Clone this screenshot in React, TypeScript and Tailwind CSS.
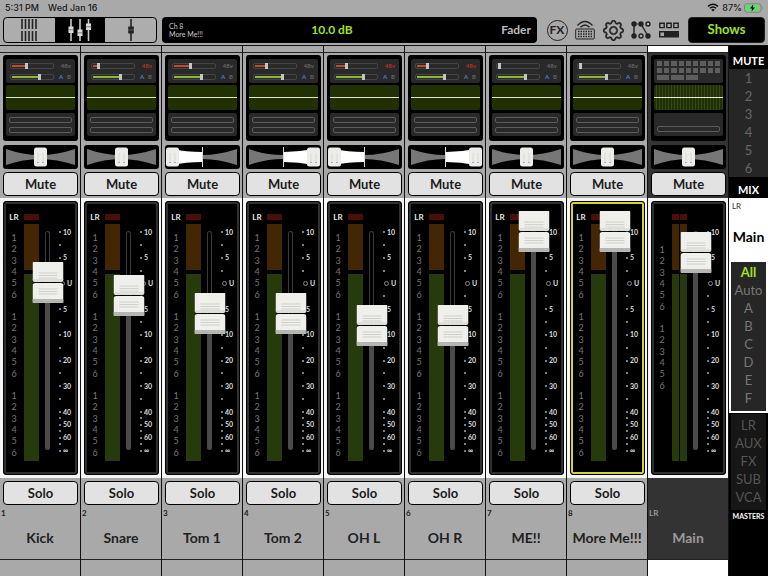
import { useState } from "react";
import { BsGear } from "react-icons/bs";
import { clsx } from "clsx";

type Channel = {
  id: string;
  name: string;
  gain: number;
  phantom: boolean;
  pan: number;
  level: number;
};

const channels: Channel[] = [
  { id: "1", name: "Kick", gain: 13, phantom: false, pan: 0, level: 167 },
  { id: "2", name: "Snare", gain: 4, phantom: true, pan: 0, level: 154 },
  { id: "3", name: "Tom 1", gain: 15, phantom: false, pan: -30, level: 136 },
  { id: "4", name: "Tom 2", gain: 10, phantom: false, pan: 30, level: 136 },
  { id: "5", name: "OH L", gain: 9, phantom: true, pan: -30, level: 124 },
  { id: "6", name: "OH R", gain: 9, phantom: true, pan: 30, level: 124 },
  { id: "7", name: "ME!!", gain: 0, phantom: false, pan: 0, level: 218 },
  { id: "8", name: "More Me!!!", gain: 0, phantom: false, pan: 0, level: 218 },
];

const FADER_MAX = 218;

// Half-step rows of the fader scale, top to bottom
const scale = [
  "10", "", ".", "", "5", "", ".", "", "U", "", ".", "", "5", "", ".", "",
  "10", "", ".", "", "20", "", ".", "", "30", "", ".", "", "40", ".", "50",
  ".", "60", ".", "∞",
];

const busSteps = ["1", "2", "3", "4", "5", "6"];

function Pan({ label, initial }: { label: string; initial: number }) {
  const [value, setValue] = useState(initial);
  const x = 37 + value;

  return (
    <div className="relative mt-1 h-6 overflow-hidden rounded-[3px] bg-black">
      <svg viewBox="0 0 75 24" className="h-6 w-full" aria-hidden="true">
        <path d="M3 4 Q20 10 37 10 Q54 10 72 4 V20 Q54 14 37 14 Q20 14 3 20Z" fill="#777" />
        {value < 0 && <path d={`M37 7 Q${x + 14} 7 ${x} 4 V20 Q${x + 14} 17 37 17Z`} fill="#fff" />}
        {value > 0 && <path d={`M38 7 Q${x - 14} 7 ${x} 4 V20 Q${x - 14} 17 38 17Z`} fill="#fff" />}
        {value !== 0 && <path d="M37.5 2 V22" stroke="#ddd" />}
        <rect x={x - 6} y="2.5" width="13" height="19" rx="2.5" fill="#ecece9" />
        <path d={`M${x - 2} 8 V18 M${x + 3} 8 V18`} stroke="#d9d9d5" />
        <path d={`M${x - 3} 17.5 H${x - 1} M${x + 2} 17.5 H${x + 4}`} stroke="#aaa" />
      </svg>
      <input
        type="range"
        aria-label={`${label} pan`}
        min={-30}
        max={30}
        value={value}
        onChange={(e) => setValue(Number(e.target.value))}
        className="absolute inset-0 h-full w-full opacity-0"
      />
    </div>
  );
}

function FaderCap() {
  return (
    <svg viewBox="0 0 31 41" className="h-[41px] w-[31px]" aria-hidden="true">
      <rect y="1" width="31" height="40" fill="#000" opacity="0.6" />
      <path d="M0 1 Q0 0 1 0 H30 Q31 0 31 1 V17 Q31 20 28 20 H3 Q0 20 0 17Z" fill="#efefec" />
      <path d="M0 17 Q0 20 3 20 H28 Q31 20 31 17Z" fill="#dededb" />
      <path d="M3 21 H28 Q31 21 31 24 V40 Q31 41 30 41 H1 Q0 41 0 40 V24 Q0 21 3 21Z" fill="#efefec" />
      <path d="M0 37 H31 V40 Q31 41 30 41 H1 Q0 41 0 40Z" fill="#b5b5b2" />
      <path d="M6 11 H25 M6 13.5 H25 M6 16 H25 M6 27 H25 M6 29.5 H25 M6 32 H25" stroke="#ccccc8" strokeWidth="0.9" />
    </svg>
  );
}

function Fader({ label, initial }: { label: string; initial: number }) {
  const [value, setValue] = useState(initial);

  return (
    <div className="relative mt-2 h-[259px] w-[17px] shrink-0">
      <div className="mx-auto flex h-full w-[5px] flex-col py-5">
        <div className="flex-1 rounded-t-sm border border-b-0 border-[#3a3a3a]" />
        <div className="rounded-b-sm bg-[#4a4a4a]" style={{ height: value }} />
      </div>
      <div
        className="absolute left-1/2 -translate-x-1/2"
        style={{ top: FADER_MAX - value }}
      >
        <FaderCap />
      </div>
      <input
        type="range"
        aria-label={`${label} level`}
        min={0}
        max={FADER_MAX}
        value={value}
        onChange={(e) => setValue(Number(e.target.value))}
        className="absolute inset-y-0 left-1/2 h-full w-[31px] -translate-x-1/2 opacity-0 [direction:rtl] [writing-mode:vertical-lr]"
      />
    </div>
  );
}

function Meter() {
  return (
    <div className="flex flex-1 flex-col gap-1">
      <div className="h-[6px] bg-[#4a0f08]" />
      <div className="h-[46px] bg-[#432604]" />
      <div className="h-[187px] bg-[#263a0b]" />
    </div>
  );
}

function BusSteps() {
  return (
    <div className="mb-[11px] flex h-[68px] shrink-0 flex-col last:mb-0">
      {busSteps.map((step) => (
        <span key={step} className="flex flex-1 items-center justify-center leading-none">
          {step}
        </span>
      ))}
    </div>
  );
}

function Scale() {
  return (
    <div className="ml-[3px] mt-[26px] flex h-[225px] w-[17px] shrink-0 flex-col text-[7px] font-bold leading-none text-[#ddd]">
      {scale.map((mark, i) => (
        <div key={i} className="flex h-0 flex-1 items-center gap-[2px]">
          {mark === "U" && <span className="ml-px size-[5px] rounded-full border border-[#888]" />}
          {mark !== "" && mark !== "U" && <span className="size-[2px] shrink-0 rounded-full bg-[#aaa]" />}
          {mark !== "." && <span>{mark}</span>}
        </div>
      ))}
    </div>
  );
}

function FaderBox({ label, level, main, selected }: { label: string; level: number; main?: boolean; selected?: boolean }) {
  return (
    <div className="bg-[#f6f6f6] py-[3px] pl-[3px] pr-[2px]">
      <div
        className={clsx(
          "flex h-[274px] justify-center overflow-hidden rounded-[3px] border border-black bg-black p-px inset-ring-2",
          selected ? "inset-ring-[#d8d52a]" : "inset-ring-[#303030]",
        )}
      >
        <div className="flex w-[18px] shrink-0 flex-col pt-[9px] text-[9px] text-[#777]">
          <span className={clsx("h-[10px] shrink-0 text-center text-[8px] font-bold leading-[10px] text-[#e5e5e5]", main ? "mb-[22px]" : "mb-[10px]")}>
            {main ? "" : "LR"}
          </span>
          <BusSteps />
          <BusSteps />
          {!main && <BusSteps />}
        </div>
        <div className="ml-px mt-[11px] flex w-[15px] shrink-0 gap-px">
          <Meter />
          {main && <Meter />}
        </div>
        <Fader label={label} initial={level} />
        <Scale />
      </div>
    </div>
  );
}

function ChannelPreview({ channel }: { channel: Channel }) {
  return (
    <button
      aria-label={`Open ${channel.name}`}
      className="flex h-[86px] w-full flex-col rounded-[3px] bg-black px-[3px] pt-1"
    >
      <span className="flex h-6 w-full flex-col rounded-xs bg-[#292929] px-1 pt-px text-[6px] font-bold leading-none">
        <span className="flex h-[11px] items-center justify-between">
          <span className="flex h-[6px] w-11 shrink-0 items-center rounded-xs border border-[#454545] px-px">
            <span className="h-[2px] bg-[#c4492a]" style={{ width: channel.gain }} />
            <span className="h-[6px] w-[3px] shrink-0 bg-[#c4c4c4]" />
          </span>
          <span className={channel.phantom ? "text-[#b8301c]" : "text-[#666]"}>48v</span>
        </span>
        <span className="flex h-[11px] items-center">
          <span className="flex h-[6px] w-11 shrink-0 items-center rounded-xs border border-[#454545] px-px">
            <span className="h-[2px] w-[26px] bg-[#8fba35]" />
            <span className="h-[6px] w-[3px] shrink-0 bg-[#c4c4c4]" />
          </span>
          <span className="ml-auto text-[#4d7fc9]">A</span>
          <span className="ml-1 text-[#666]">B</span>
        </span>
      </span>
      <span className="mt-[2px] flex h-[25px] w-full items-center rounded-xs bg-[#213104]">
        <span className="h-px w-full bg-[#dfe8c8]" />
      </span>
      <span className="mt-[3px] flex h-[23px] w-full flex-col justify-center gap-1 rounded-xs bg-[#292929] px-[3px]">
        <span className="h-[6px] rounded-xs border border-[#5c5c5c]" />
        <span className="h-[6px] rounded-xs border border-[#5c5c5c]" />
      </span>
    </button>
  );
}

function MainPreview() {
  return (
    <button
      aria-label="Open Main"
      className="flex h-[86px] w-full flex-col rounded-[3px] bg-black px-[3px] pt-1"
    >
      <span className="grid h-6 w-full grid-cols-9 content-start gap-[2px] rounded-xs bg-[#292929] px-[3px] pt-[2px]">
        {Array.from({ length: 18 }, (_, i) => (
          <span key={i} className="h-[5px] bg-[#5e5e5e]" />
        ))}
        <span className="col-span-2 h-[5px] bg-[#5e5e5e]" />
        <span className="col-span-2 h-[5px] bg-[#5e5e5e]" />
        <span className="col-span-2 h-[5px] bg-[#5e5e5e]" />
      </span>
      <span className="mt-[2px] flex h-[25px] w-full items-center rounded-xs bg-[repeating-linear-gradient(90deg,#213104_0_2px,#33461a_2px_3px)]">
        <span className="h-px w-full bg-[#e8edda]" />
      </span>
      <span className="mt-[3px] flex h-[23px] w-full flex-col justify-end rounded-xs bg-[#292929] px-[3px] pb-1">
        <span className="h-[6px] rounded-xs border border-[#5c5c5c]" />
      </span>
    </button>
  );
}

function StripButton({ children }: { children: string }) {
  return (
    <button className="flex h-6 w-full items-center justify-center rounded-[4px] border border-black bg-[#e2e2e2] text-[13px] font-bold leading-none text-[#1c1c1c]">
      {children}
    </button>
  );
}

function ChannelStrip({ channel }: { channel: Channel }) {
  return (
    <section className="flex min-w-0 flex-col border-r border-[#111] bg-[#a9a9a9]">
      <div className="h-[7px] border-b border-[#222]" />
      <div className="flex flex-col pb-[2px] pl-[3px] pr-[2px] pt-[2px]">
        <ChannelPreview channel={channel} />
        <Pan label={channel.name} initial={channel.pan} />
        <div className="mt-[3px]">
          <StripButton>Mute</StripButton>
        </div>
      </div>
      <FaderBox label={channel.name} level={channel.level} selected={channel.id === "8"} />
      <div className="flex h-[82px] flex-col border-b border-[#222]">
        <div className="pl-[3px] pr-[2px] pt-[3px]">
          <StripButton>Solo</StripButton>
        </div>
        <span className="h-4 pl-px text-[8px] font-bold leading-4 text-[#222]">{channel.id}</span>
        <h2 className="whitespace-nowrap text-center text-[14px] font-bold leading-[34px] text-[#222]">{channel.name}</h2>
      </div>
    </section>
  );
}

function MainStrip() {
  return (
    <section className="flex min-w-0 flex-col border-r border-[#111] bg-[#333]">
      <div className="h-[7px] border-b border-[#222] bg-white" />
      <div className="flex flex-col pb-[2px] pl-[3px] pr-[2px] pt-[2px]">
        <MainPreview />
        <Pan label="Main" initial={0} />
        <div className="mt-[3px]">
          <StripButton>Mute</StripButton>
        </div>
      </div>
      <FaderBox label="Main" level={197} main />
      <div className="flex h-[82px] flex-col border-b border-[#222] pt-[27px]">
        <span className="h-4 pl-px text-[8px] font-bold leading-4 text-[#999]">LR</span>
        <h2 className="text-center text-[14px] font-bold leading-[34px] text-[#999]">Main</h2>
      </div>
      <div className="flex-1 bg-white" />
    </section>
  );
}

function SideItem({ children, className }: { children: string; className?: string }) {
  return (
    <button className={clsx("flex h-[18px] w-full items-center justify-center text-[13px] leading-none", className)}>
      {children}
    </button>
  );
}

function Sidebar() {
  return (
    <nav aria-label="Mixes" className="flex w-[39px] shrink-0 flex-col bg-black text-white">
      <h3 className="flex h-[23px] items-center justify-center pt-[6px] text-[11px] font-bold leading-none">MUTE</h3>
      <div className="bg-[#262626] text-[#666]">
        {busSteps.map((n) => (
          <SideItem key={n}>{n}</SideItem>
        ))}
      </div>
      <h3 className="flex h-[21px] items-center justify-center pt-1 text-[11px] font-bold leading-none">MIX</h3>
      <div className="bg-white px-[2px] pb-[2px] text-black">
        <span className="block h-4 pl-px text-[8px] leading-4 text-[#333]">LR</span>
        <button className="flex h-12 w-full items-center justify-center pb-1 text-[14px] font-bold">Main</button>
        <div className="bg-[#262626] pb-1 pt-px text-[#777]">
          <SideItem className="font-bold text-[#a5e01f]">All</SideItem>
          {["Auto", "A", "B", "C", "D", "E", "F"].map((item) => (
            <SideItem key={item}>{item}</SideItem>
          ))}
        </div>
      </div>
      <div className="mx-[2px] mt-px bg-[#171717] pb-1 pt-[2px] text-[#555]">
        {["LR", "AUX", "FX", "SUB", "VCA"].map((item) => (
          <SideItem key={item}>{item}</SideItem>
        ))}
      </div>
      <h3 className="text-center text-[7px] font-bold leading-3">MASTERS</h3>
    </nav>
  );
}

function StatusBar() {
  return (
    <div className="flex h-[17px] items-center pb-[2px] pl-[5px] pr-1 font-['Inter',sans-serif] text-[9px] font-medium text-[#1a1a1a]">
      <span>5:31 PM</span>
      <span className="ml-[9px]">Wed Jan 16</span>
      <svg viewBox="0 0 12 9" className="ml-auto h-[9px] w-3" aria-hidden="true">
        <path d="M1 3.4 Q6 -0.8 11 3.4 M2.8 5.3 Q6 2.6 9.2 5.3" fill="none" stroke="#111" strokeWidth="1.4" />
        <path d="M4.2 6.7 Q6 5.3 7.8 6.7 L6 8.6Z" fill="#111" />
      </svg>
      <span className="ml-[3px]">87%</span>
      <svg viewBox="0 0 20 10" className="ml-[2px] h-[10px] w-5" aria-hidden="true">
        <rect x="0.5" y="0.8" width="16.5" height="8.4" rx="2.4" fill="#a9a9a9" stroke="#777" strokeWidth="0.8" />
        <rect x="1.5" y="1.8" width="13.5" height="6.4" rx="1.4" fill="#5fdc6c" />
        <path d="M18 3.6 Q19.4 5 18 6.4Z" fill="#777" />
        <path d="M9.2 1.6 L5.8 5.5 H8 L7.6 8.4 L11 4.5 H8.8Z" fill="#111" />
      </svg>
    </div>
  );
}

function ViewTabs() {
  return (
    <div className="flex w-[154px] shrink-0 overflow-hidden rounded-[4px] border border-black bg-[#adadad]">
      <button aria-label="Channel overview" className="flex flex-1 items-center justify-center">
        <svg viewBox="0 0 16 22" className="h-[22px] w-4" aria-hidden="true">
          <path d="M1 0V10M4.5 0V10M8 0V10M11.5 0V10M15 0V10M1 12V22M4.5 12V22M8 12V22M11.5 12V22M15 12V22" stroke="#222" strokeWidth="1.6" />
        </svg>
      </button>
      <button aria-label="Faders" className="flex flex-1 items-center justify-center bg-black">
        <svg viewBox="0 0 24 24" className="size-6" aria-hidden="true">
          <path d="M3 1V23M12 1V23M20.5 1V23" stroke="#ccc" strokeWidth="1.6" />
          <path d="M0.5 8.5H5.5V15H0.5ZM9.5 11.5H14.5V18H9.5ZM18 5.5H23V12H18Z" fill="#ddd" />
          <path d="M0 11.8H6M9 14.8H15M17.5 8.8H23.5" stroke="#666" strokeWidth="0.8" />
        </svg>
      </button>
      <button aria-label="Single channel" className="flex flex-1 items-center justify-center">
        <svg viewBox="0 0 8 24" className="h-6 w-2" aria-hidden="true">
          <path d="M4 1V23" stroke="#222" strokeWidth="1.6" />
          <path d="M1.2 8.5H6.8V15.5H1.2Z" fill="#222" />
          <path d="M1 12H7" stroke="#666" strokeWidth="0.8" />
        </svg>
      </button>
    </div>
  );
}

function Header() {
  return (
    <header className="border-b border-[#111] bg-[#a9a9a9]">
      <StatusBar />
      <div className="flex h-7 px-[3px] pb-[2px]">
        <ViewTabs />
        <div className="ml-[5px] flex flex-1 items-center rounded-[4px] bg-black pl-[7px] pr-[6px] text-[12px] font-bold text-[#bbb]">
          <div className="w-8 whitespace-nowrap text-[7px] font-normal leading-2 text-[#ccc]">
            <p>Ch 8</p>
            <p>More Me!!!</p>
          </div>
          <span className="flex-1 text-center text-[#a0e02c]">10.0 dB</span>
          <span className="w-[68px] text-right">Fader</span>
        </div>
        <div className="ml-[6px] mr-[5px] flex items-center text-[#222] *:flex *:w-7 *:items-center *:justify-center">
          <button aria-label="Effects">
            <span className="flex size-[21px] items-center justify-center rounded-full border border-[#222] text-[12px] font-bold leading-none">FX</span>
          </button>
          <button aria-label="Device">
            <svg viewBox="0 0 20 20" className="size-5" aria-hidden="true" fill="none" stroke="#222">
              <path d="M2.5 5.5 Q10 -2.5 17.5 5.5 M5.5 7.3 Q10 2.6 14.5 7.3" strokeWidth="1.4" />
              <rect x="0.7" y="9" width="18.6" height="10" rx="1" />
              <path d="M3 11.5H17.5M3 14H17.5M3 16.5H17.5" strokeWidth="1.5" strokeDasharray="1.5 1" />
            </svg>
          </button>
          <button aria-label="Settings">
            <BsGear className="size-[21px]" strokeWidth={0.4} />
          </button>
          <button aria-label="Snapshots">
            <svg viewBox="0 0 20 20" className="size-5" aria-hidden="true" fill="none" stroke="#222" strokeWidth="1.4">
              <path d="M3 4V16M10 4L17 16" />
              <path d="M3 4H9" strokeWidth="0.8" />
              <circle cx="3" cy="4" r="2" fill="#222" />
              <circle cx="10" cy="4" r="2" fill="#222" />
              <circle cx="17" cy="4" r="2" />
              <circle cx="3" cy="16" r="2" fill="#222" />
              <circle cx="10" cy="16" r="2" />
              <circle cx="17" cy="16" r="2" fill="#222" />
            </svg>
          </button>
          <button aria-label="Quick access">
            <svg viewBox="0 0 20 20" className="size-5" aria-hidden="true">
              <path d="M0.8 3.2H5.2V7.6H0.8ZM7.8 3.2H12.2V7.6H7.8ZM14.8 3.2H19.2V7.6H14.8Z" fill="none" stroke="#222" strokeWidth="1.4" />
              <rect y="11" width="20" height="6.5" fill="#222" />
              <rect x="1.5" y="12.5" width="3.5" height="3.5" fill="#a9a9a9" />
            </svg>
          </button>
        </div>
        <button className="w-[77px] rounded-[4px] border border-[#222] bg-black text-[13px] font-bold text-[#a0e02c]">
          Shows
        </button>
      </div>
    </header>
  );
}

export default function App() {
  return (
    <div className="flex min-h-screen flex-col bg-black font-['Lato',sans-serif]">
      <Header />
      <main className="flex flex-1">
        <div className="grid flex-1 grid-cols-9">
          {channels.map((channel) => (
            <ChannelStrip key={channel.id} channel={channel} />
          ))}
          <MainStrip />
        </div>
        <Sidebar />
      </main>
    </div>
  );
}
